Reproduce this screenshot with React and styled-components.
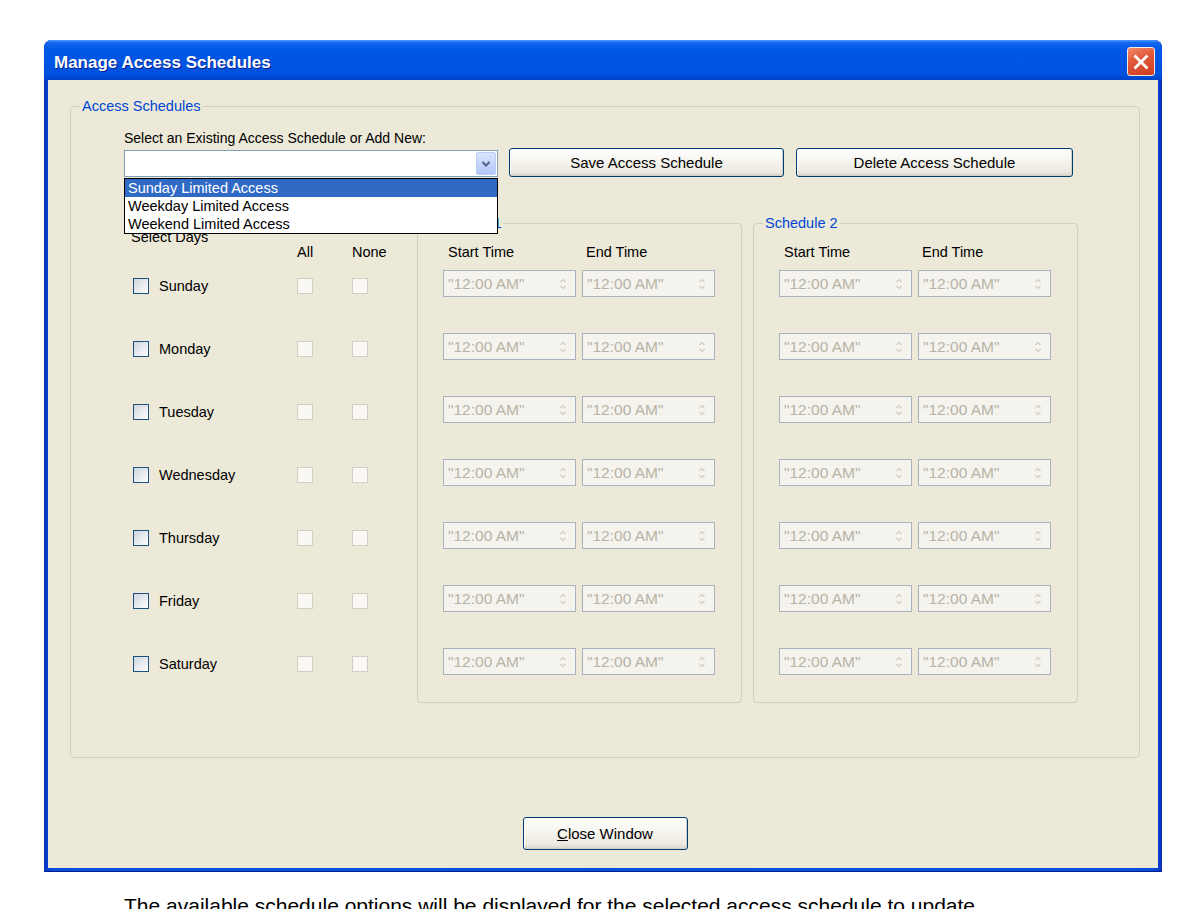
import React from 'react';
import styled, { createGlobalStyle } from 'styled-components';

const GlobalStyle = createGlobalStyle`
  html, body { margin: 0; padding: 0; background: #ffffff; }
  body { font-family: "Liberation Sans", Arial, sans-serif; color: #000; }
  * { box-sizing: border-box; }
`;

const Page = styled.div`
  padding: 40px 0 0 44px;
  display: flex;
  flex-direction: column;
  align-items: flex-start;
`;

const Window = styled.div`
  width: 1118px;
  border-radius: 8px 8px 0 0;
  background: linear-gradient(90deg, #0836c4 0%, #0a4fdc 1%, #0650e0 50%, #0a4fdc 99%, #0836c4 100%);
  box-shadow: inset 0 -1px 0 #00208c, inset 1px 0 0 #0a2fa8, inset -1px 0 0 #0a2fa8;
  display: flex;
  flex-direction: column;
`;

const TitleBar = styled.div`
  height: 40px;
  display: flex;
  justify-content: space-between;
  align-items: flex-start;
  padding: 0 7px 0 10px;
  border-radius: 8px 8px 0 0;
  background: linear-gradient(180deg, #4a9bff 0%, #1466ef 7%, #0058e6 25%, #0054e3 60%, #0050dc 88%, #0040c8 100%);
`;

const Title = styled.div`
  margin-top: 13px;
  color: #ffffff;
  font-family: "Liberation Sans", Arial, sans-serif;
  font-weight: bold;
  font-size: 17px;
  line-height: 20px;
  text-shadow: 1px 1px 0 #0a1e8c;
`;

const CloseX = styled.div`
  margin-top: 7px;
  width: 28px;
  height: 29px;
  border: 1px solid #f4e6e0;
  border-radius: 3px;
  background: linear-gradient(160deg, #f08a6a 0%, #e3583b 40%, #cc3d1f 100%);
  display: flex;
  align-items: center;
  justify-content: center;
`;

const Client = styled.div`
  margin: 0 4px 4px 4px;
  background: #ece9d8;
  padding: 18px 18px 18px 22px;
  display: flex;
  flex-direction: column;
`;

const Group = styled.fieldset`
  margin: 0;
  min-width: 0;
  padding: 0;
  border: 1px solid #d0d0bf;
  border-radius: 4px;
  width: ${(p) => p.$width || 'auto'};
`;

const Legend = styled.legend`
  margin-left: 9px;
  padding: 0 2px;
  color: #0046d5;
  font-size: 14.5px;
  line-height: 16px;
`;

const GroupBody = styled.div`
  padding: ${(p) => p.$pad};
`;

const FormLabel = styled.div`
  font-size: 14px;
  line-height: 16px;
  margin-bottom: 2px;
`;

const ControlRow = styled.div`
  display: flex;
  align-items: flex-start;
  height: 29px;
`;

const Combo = styled.div`
  position: relative;
  width: 374px;
  height: 27px;
  margin-top: 2px;
  border: 1px solid #7f9db9;
  background: #ffffff;
  display: flex;
  justify-content: flex-end;
`;

const ComboArrow = styled.div`
  width: 20px;
  height: 23px;
  margin: 1px;
  border-radius: 2px;
  border: 1px solid #b9cdf6;
  background: linear-gradient(180deg, #dbe6fd 0%, #c3d5fb 50%, #b2c8f7 100%);
  display: flex;
  align-items: center;
  justify-content: center;
`;

const DropList = styled.div`
  position: absolute;
  top: 27px;
  left: -1px;
  width: 374px;
  border: 1px solid #000000;
  background: #ffffff;
  z-index: 5;
`;

const DropItem = styled.div`
  height: 18px;
  line-height: 18px;
  padding-left: 3px;
  font-size: 14.5px;
  background: ${(p) => (p.$selected ? '#316ac5' : 'transparent')};
  color: ${(p) => (p.$selected ? '#ffffff' : '#000000')};
`;

const XPButton = styled.button`
  width: ${(p) => p.$w}px;
  height: ${(p) => p.$h}px;
  margin-left: ${(p) => p.$ml || 0}px;
  border: 1px solid #003c74;
  border-radius: 3px;
  background: linear-gradient(180deg, #ffffff 0%, #f6f5f0 40%, #ebe9e0 85%, #d8d3c6 100%);
  font-family: "Liberation Sans", Arial, sans-serif;
  font-size: 15px;
  color: #000000;
  padding: 0;
  box-shadow: inset -1px -1px 0 #d4d0c3, inset 1px 1px 0 #ffffff;
`;

const LowerRow = styled.div`
  display: flex;
  gap: 11px;
  margin-top: 38px;
  align-items: flex-start;
`;

const DaysColumn = styled.div`
  width: 282px;
  padding-top: 15px;
`;

const DaysTitle = styled.div`
  padding-left: 7px;
  font-size: 14.5px;
  line-height: 14px;
`;

const dayCols = '173px 55px 1fr';

const DaysHeader = styled.div`
  display: grid;
  grid-template-columns: ${dayCols};
  height: 16px;
  line-height: 16px;
  font-size: 14.5px;
  margin-bottom: 10px;
`;

const RowStack = styled.div`
  display: grid;
  grid-auto-rows: 27px;
  row-gap: 36px;
`;

const DayRow = styled.div`
  display: grid;
  grid-template-columns: ${dayCols};
  align-items: center;
  padding-top: 5px;
`;

const DayCell = styled.div`
  display: flex;
  align-items: center;
  gap: 10px;
  padding-left: 9px;
  font-size: 14.5px;
  line-height: 16px;
`;

const Check = styled.span`
  display: block;
  width: 16px;
  height: 16px;
  border: 1px solid ${(p) => (p.$disabled ? '#d2cfc2' : '#1c5180')};
  background: ${(p) =>
    p.$disabled
      ? '#f9f8f4'
      : 'linear-gradient(135deg, #cfd4dc 0%, #e6e9ee 50%, #ffffff 100%)'};
`;

const timeCols = '133px 133px';

const TimeHeader = styled.div`
  display: grid;
  grid-template-columns: ${timeCols};
  column-gap: 6px;
  height: 16px;
  line-height: 16px;
  font-size: 14.5px;
  margin-bottom: 10px;
`;

const HeadCell = styled.span`
  padding-left: ${(p) => p.$pl}px;
`;

const TimeRow = styled.div`
  display: grid;
  grid-template-columns: ${timeCols};
  column-gap: 6px;
`;

const TimeBox = styled.div`
  height: 27px;
  border: 1px solid #a9b3bd;
  background: #f4f3ee;
  display: flex;
  align-items: center;
  justify-content: space-between;
  padding: 0 8px 0 4px;
  color: #b8b4a5;
  font-size: 15.5px;
  white-space: nowrap;
`;

const Footer = styled.div`
  margin-top: 59px;
  display: flex;
  justify-content: center;
`;

const Underline = styled.span`
  text-decoration: underline;
`;

const Caption = styled.p`
  margin: 22px 0 0 80px;
  font-family: "Liberation Sans", Arial, sans-serif;
  font-size: 21px;
  line-height: 24px;
  color: #000000;
  white-space: nowrap;
`;

const days = ['Sunday', 'Monday', 'Tuesday', 'Wednesday', 'Thursday', 'Friday', 'Saturday'];

function Spinner() {
  return (
    <svg width="8" height="14" viewBox="0 0 8 14">
      <path d="M1.5 5 L4 2.5 L6.5 5" fill="none" stroke="#d0cdc1" strokeWidth="1.2" />
      <path d="M1.5 9 L4 11.5 L6.5 9" fill="none" stroke="#d0cdc1" strokeWidth="1.2" />
    </svg>
  );
}

function Schedule({ title }) {
  return (
    <Group $width="325px">
      <Legend>{title}</Legend>
      <GroupBody $pad="13px 0 27px 25px">
        <TimeHeader>
          <HeadCell $pl={5}>Start Time</HeadCell>
          <HeadCell $pl={4}>End Time</HeadCell>
        </TimeHeader>
        <RowStack>
          {days.map((d) => (
            <TimeRow key={d}>
              <TimeBox>
                <span>"12:00 AM"</span>
                <Spinner />
              </TimeBox>
              <TimeBox>
                <span>"12:00 AM"</span>
                <Spinner />
              </TimeBox>
            </TimeRow>
          ))}
        </RowStack>
      </GroupBody>
    </Group>
  );
}

export default function App() {
  return (
    <>
      <GlobalStyle />
      <Page>
        <Window>
          <TitleBar>
            <Title>Manage Access Schedules</Title>
            <CloseX>
              <svg width="16" height="16" viewBox="0 0 16 16">
                <path d="M2.5 2.5 L13.5 13.5 M13.5 2.5 L2.5 13.5" stroke="#ffffff" strokeWidth="2.8" strokeLinecap="square" />
              </svg>
            </CloseX>
          </TitleBar>
          <Client>
            <Group>
              <Legend>Access Schedules</Legend>
              <GroupBody $pad="16px 0 54px 53px">
                <FormLabel>Select an Existing Access Schedule or Add New:</FormLabel>
                <ControlRow>
                  <Combo>
                    <ComboArrow>
                      <svg width="10" height="8" viewBox="0 0 10 8">
                        <path d="M1.5 2 L5 5.5 L8.5 2" fill="none" stroke="#4d6185" strokeWidth="2" />
                      </svg>
                    </ComboArrow>
                    <DropList>
                      <DropItem $selected>Sunday Limited Access</DropItem>
                      <DropItem>Weekday Limited Access</DropItem>
                      <DropItem>Weekend Limited Access</DropItem>
                    </DropList>
                  </Combo>
                  <XPButton $w={275} $h={29} $ml={11}>Save Access Schedule</XPButton>
                  <XPButton $w={277} $h={29} $ml={12}>Delete Access Schedule</XPButton>
                </ControlRow>
                <LowerRow>
                  <DaysColumn>
                    <DaysTitle>Select Days</DaysTitle>
                    <DaysHeader>
                      <span />
                      <span>All</span>
                      <span>None</span>
                    </DaysHeader>
                    <RowStack>
                      {days.map((d) => (
                        <DayRow key={d}>
                          <DayCell>
                            <Check />
                            <span>{d}</span>
                          </DayCell>
                          <Check $disabled />
                          <Check $disabled />
                        </DayRow>
                      ))}
                    </RowStack>
                  </DaysColumn>
                  <Schedule title="Schedule 1" />
                  <Schedule title="Schedule 2" />
                </LowerRow>
              </GroupBody>
            </Group>
            <Footer>
              <XPButton $w={165} $h={33}>
                <Underline>C</Underline>lose Window
              </XPButton>
            </Footer>
          </Client>
        </Window>
        <Caption>The available schedule options will be displayed for the selected access schedule to update.</Caption>
      </Page>
    </>
  );
}
